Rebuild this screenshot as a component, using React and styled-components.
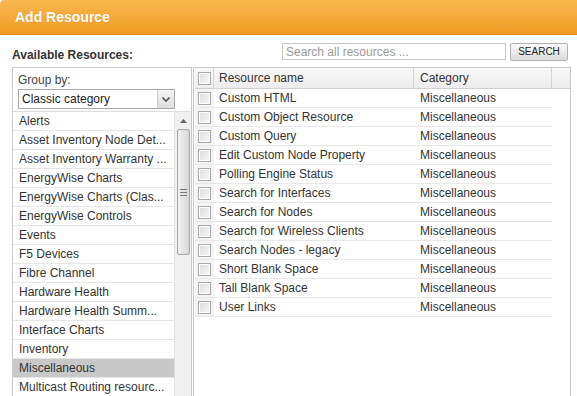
import React from "react";
import styled, { createGlobalStyle } from "styled-components";

const groups = [
  "Alerts",
  "Asset Inventory Node Det...",
  "Asset Inventory Warranty ...",
  "EnergyWise Charts",
  "EnergyWise Charts (Clas...",
  "EnergyWise Controls",
  "Events",
  "F5 Devices",
  "Fibre Channel",
  "Hardware Health",
  "Hardware Health Summ...",
  "Interface Charts",
  "Inventory",
  "Miscellaneous",
  "Multicast Routing resourc...",
];

const resources = [
  "Custom HTML",
  "Custom Object Resource",
  "Custom Query",
  "Edit Custom Node Property",
  "Polling Engine Status",
  "Search for Interfaces",
  "Search for Nodes",
  "Search for Wireless Clients",
  "Search Nodes - legacy",
  "Short Blank Space",
  "Tall Blank Space",
  "User Links",
];

const GlobalStyle = createGlobalStyle`
  html, body {
    margin: 0;
    padding: 0;
    background: #fff;
    overflow: hidden;
  }
  body {
    font-family: "Liberation Sans", Arial, sans-serif;
    font-size: 12px;
    color: #333;
  }
`;

const Page = styled.div`
  width: 577px;
  height: 396px;
  overflow: hidden;
`;

const Header = styled.div`
  height: 34px;
  border-bottom: 1px solid #e0860c;
  border-top-left-radius: 4px;
  background: linear-gradient(to bottom, #f8b850 0%, #f5a93a 50%, #f29b22 100%);
  display: flex;
  align-items: center;
  padding-left: 15px;
  color: #fff;
  font-weight: bold;
  font-size: 14px;
  text-shadow: 0 0 1px rgba(180, 90, 0, 0.4);
`;

const TopRow = styled.div`
  height: 31px;
  display: flex;
  align-items: center;
  padding: 1px 9px 0 12px;
`;

const Label = styled.div`
  font-weight: bold;
  font-size: 12px;
  color: #333;
  flex: 1;
  padding-top: 6px;
`;

const SearchInput = styled.input`
  width: 224px;
  box-sizing: border-box;
  height: 17px;
  border: 1px solid #c6c6c6;
  padding: 0 3px;
  font-family: "Liberation Sans", Arial, sans-serif;
  font-size: 12px;
  margin-right: 4px;
  &::placeholder {
    color: #999;
  }
`;

const SearchButton = styled.button`
  width: 58px;
  height: 18px;
  border: 1px solid #b0b0b0;
  border-radius: 2px;
  background: linear-gradient(to bottom, #fafafa, #dcdcdc);
  font-family: "Liberation Sans", Arial, sans-serif;
  font-size: 10px;
  color: #222;
  padding: 0;
`;

const Body = styled.div`
  display: flex;
  padding-left: 12px;
  height: 329px;
`;

const LeftPanel = styled.div`
  width: 178px;
  border: 1px solid #c9c9c9;
  border-bottom: none;
  display: flex;
  flex-direction: column;
`;

const GroupBy = styled.div`
  padding: 5px 0 0 5px;
  height: 44px;
  flex: none;
  box-sizing: border-box;
  border-bottom: 1px solid #ddd;
  background: #fff;
`;

const GroupLabel = styled.div`
  font-size: 12px;
  color: #444;
  line-height: 14px;
`;

const Select = styled.div`
  margin-top: 2px;
  width: 157px;
  height: 20px;
  box-sizing: border-box;
  border: 1px solid #a9a9a9;
  display: flex;
  align-items: center;
  justify-content: space-between;
  padding-left: 3px;
  font-size: 12px;
  color: #222;
`;

const SelectArrow = styled.div`
  width: 16px;
  height: 18px;
  border-left: 1px solid #ccc;
  background: linear-gradient(to bottom, #f4f4f4, #dedede);
  display: flex;
  align-items: center;
  justify-content: center;
`;

const ListWrap = styled.div`
  flex: 1;
  display: flex;
  overflow: hidden;
`;

const List = styled.div`
  flex: 1;
`;

const ListItem = styled.div`
  height: 18px;
  line-height: 18px;
  border-bottom: 1px solid #e6e6e6;
  padding-left: 6px;
  font-size: 12px;
  white-space: nowrap;
  overflow: hidden;
  color: #333;
  background: ${({ selected }) => (selected ? "#c8c8c8" : "#fff")};
`;

const Scrollbar = styled.div`
  width: 16px;
  background: #f0f0f0;
  border-left: 1px solid #e2e2e2;
  display: flex;
  flex-direction: column;
  align-items: center;
`;

const ScrollArrow = styled.div`
  height: 17px;
  display: flex;
  align-items: center;
  justify-content: center;
`;

const Thumb = styled.div`
  width: 13px;
  height: 126px;
  box-sizing: border-box;
  border: 1px solid #a8a8a8;
  border-radius: 2px;
  background: linear-gradient(to right, #f2f2f2, #d6d6d6);
  display: flex;
  align-items: center;
  justify-content: center;
`;

const RightPanel = styled.div`
  width: 375px;
  margin-left: 1px;
  border: 1px solid #c9c9c9;
  border-bottom: none;
  padding-left: 1px;
`;

const Row = styled.div`
  display: grid;
  grid-template-columns: 19px 200px 138px ${({ head }) => (head ? "17px" : "0")};
  height: ${({ head }) => (head ? "20px" : "18px")};
  border-bottom: 1px solid ${({ head }) => (head ? "#d0d0d0" : "#e8e8e8")};
  background: ${({ head }) =>
    head ? "linear-gradient(to bottom, #f9f9f9, #ececec)" : "#fff"};
  width: ${({ head }) => (head ? "auto" : "357px")};
`;

const Cell = styled.div`
  display: flex;
  align-items: center;
  padding-left: ${({ pad }) => pad || 0}px;
  border-right: ${({ line }) => (line ? "1px solid #d4d4d4" : "none")};
  font-size: 12px;
  color: #333;
  white-space: nowrap;
  overflow: hidden;
`;

const CheckCell = styled(Cell)`
  justify-content: center;
  background: ${({ head }) => (head ? "transparent" : "#f4f4f4")};
`;

const Check = styled.span`
  width: 11px;
  height: 11px;
  border: 1px solid #a9a9a9;
  background: linear-gradient(135deg, #dcdcdc, #f8f8f8);
  box-shadow: inset 0 0 0 1px #fff;
`;

const App = () => {
  return (
    <Page>
      <GlobalStyle />
      <Header>Add Resource</Header>
      <TopRow>
        <Label>Available Resources:</Label>
        <SearchInput placeholder="Search all resources ..." />
        <SearchButton>SEARCH</SearchButton>
      </TopRow>
      <Body>
        <LeftPanel>
          <GroupBy>
            <GroupLabel>Group by:</GroupLabel>
            <Select>
              Classic category
              <SelectArrow>
                <svg width="8" height="5" viewBox="0 0 8 5">
                  <path d="M0.5 0.5 L4 4 L7.5 0.5" stroke="#555" strokeWidth="1.6" fill="none" />
                </svg>
              </SelectArrow>
            </Select>
          </GroupBy>
          <ListWrap>
            <List>
              {groups.map((g) => (
                <ListItem key={g} selected={g === "Miscellaneous"}>
                  {g}
                </ListItem>
              ))}
            </List>
            <Scrollbar>
              <ScrollArrow>
                <svg width="7" height="4" viewBox="0 0 7 4">
                  <path d="M0 4 L3.5 0 L7 4 Z" fill="#666" />
                </svg>
              </ScrollArrow>
              <Thumb>
                <svg width="7" height="7" viewBox="0 0 7 7">
                  <path d="M0 0.5 H7 M0 3.5 H7 M0 6.5 H7" stroke="#777" strokeWidth="1" />
                </svg>
              </Thumb>
            </Scrollbar>
          </ListWrap>
        </LeftPanel>
        <RightPanel>
          <Row head>
            <CheckCell head line>
              <Check />
            </CheckCell>
            <Cell pad={5} line>
              Resource name
            </Cell>
            <Cell pad={6} line>
              Category
            </Cell>
            <Cell />
          </Row>
          {resources.map((r) => (
            <Row key={r}>
              <CheckCell>
                <Check />
              </CheckCell>
              <Cell pad={5}>{r}</Cell>
              <Cell pad={6}>Miscellaneous</Cell>
              <Cell />
            </Row>
          ))}
        </RightPanel>
      </Body>
    </Page>
  );
};

export default App;
